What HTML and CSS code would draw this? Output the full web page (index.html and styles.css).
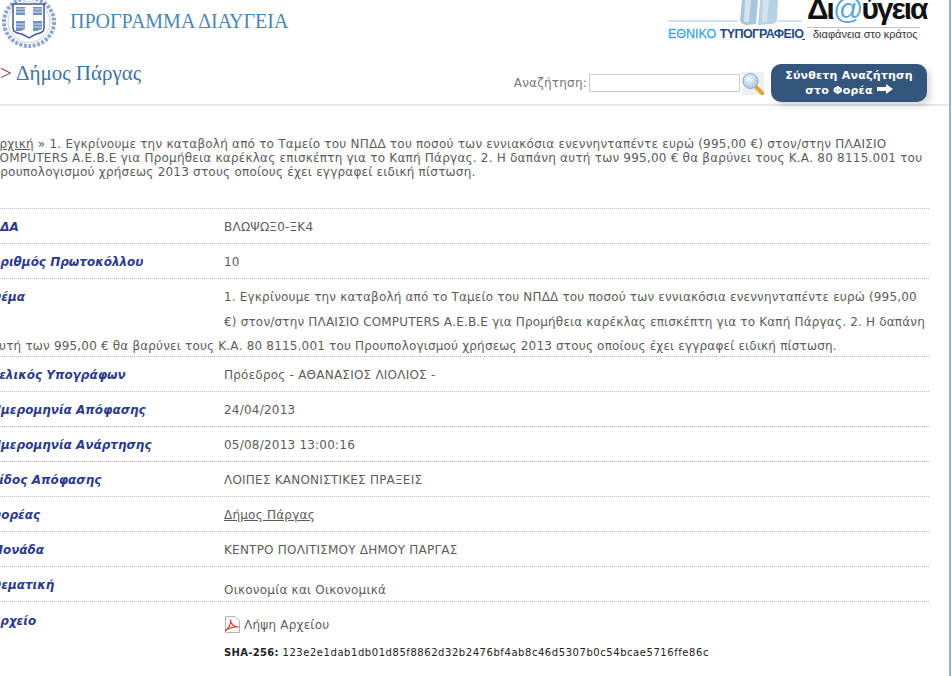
FILE: index.html
```html
<!DOCTYPE html>
<html lang="el">
<head>
    <meta charset="UTF-8">
    <meta name="viewport" content="width=device-width, initial-scale=1.0">
    <title>Πρόγραμμα Διαύγεια</title>
    <link rel="stylesheet" href="styles.css">
</head>
<body>
<div class="page">
    <div class="header">
        <div class="header-top">
            <div class="brand">
                <svg class="emblem" width="58" height="52" viewBox="0 0 58 52">
                    <ellipse cx="29" cy="24" rx="25" ry="24" fill="none" stroke="#8fa6cb" stroke-width="4" stroke-dasharray="3 1.5"/>
                    <ellipse cx="29" cy="24" rx="21" ry="20.5" fill="none" stroke="#c5d1e4" stroke-width="1"/>
                    <path d="M13 6H44V30Q44 35 36 36L29 40L22 36Q13 35 13 30Z" fill="#fff" stroke="#44598f" stroke-width="1.5"/>
                    <path d="M16 9H25V17H16ZM33 9H42V17H33ZM16 23H25V31L21 33H16ZM33 23H42V31L37 33H33Z" fill="#6f92c0"/>
                    <path d="M16 11H25M33 11H42M16 14H25M33 14H42M16 26H25M33 26H42M16 29H25M33 29H42" stroke="#d8e2ef" stroke-width="1"/>
                </svg>
                <span class="brand-name">ΠΡΟΓΡΑΜΜΑ ΔΙΑΥΓΕΙΑ</span>
            </div>
            <div class="logos">
                <a class="printer-logo" href="#">
                    <svg width="136" height="28" viewBox="0 0 136 28">
                        <path d="M0 21H70M110 21H134" stroke="#a9c4dc" stroke-width="1"/>
                        <path d="M74 0H90L88 24L78 25Q72 24 72 20Z" fill="#a8c5de"/>
                        <path d="M92 0H110L109 20Q108 24 103 24L90 25Z" fill="#b9d1e5"/>
                        <path d="M77 0H83L81 22H76ZM95 0H101L99 22H94Z" fill="#d3e2ef"/>
                    </svg>
                    <span class="printer-name"><span class="printer-cyan">ΕΘΝΙΚΟ</span> <b class="printer-navy">ΤΥΠΟΓΡΑΦΕΙΟ</b><u class="printer-tail">&nbsp;</u></span>
                </a>
                <div class="diavgeia-logo">
                    <div class="diavgeia-name">Δι<span class="diavgeia-at">@</span>ύγεια</div>
                    <div class="diavgeia-tag">διαφάνεια στο κράτος</div>
                </div>
            </div>
        </div>
        <div class="header-bottom">
            <h2 class="org-title"><span class="org-arrow">&gt;</span> Δήμος Πάργας</h2>
            <form class="search">
                <label class="search-label" for="q">Αναζήτηση:</label>
                <input class="search-input" id="q" type="text">
                <span class="search-icon">
                    <svg width="22" height="23" viewBox="0 0 22 23">
                        <defs>
                            <radialGradient id="lens" cx="0.4" cy="0.35" r="0.7">
                                <stop offset="0" stop-color="#f4f8fd"/>
                                <stop offset="1" stop-color="#a4c0e2"/>
                            </radialGradient>
                        </defs>
                        <path d="M13 14L20.500 21.500" stroke="#e0a535" stroke-width="4" stroke-linecap="round"/>
                        <circle cx="8.500" cy="9" r="7.500" fill="url(#lens)" stroke="#8ea9c9" stroke-width="1"/>
                    </svg>
                </span>
                <a class="advanced-btn" href="#">
                    Σύνθετη Αναζήτηση<br>στο Φορέα
                    <svg width="16" height="10" viewBox="0 0 16 10"><path d="M0 3H9V0L16 5L9 10V7H0Z" fill="#fff"/></svg>
                </a>
            </form>
        </div>
    </div>

    <div class="content">
        <p class="crumbs"><a href="#">Αρχική</a> » 1. Εγκρίνουμε την καταβολή από το Ταμείο του ΝΠΔΔ του ποσού των εννιακόσια ενεννηνταπέντε ευρώ (995,00 €) στον/στην ΠΛΑΙΣΙΟ COMPUTERS Α.Ε.Β.Ε για Προμήθεια καρέκλας επισκέπτη για το Καπή Πάργας. 2. Η δαπάνη αυτή των 995,00 € θα βαρύνει τους Κ.Α. 80 8115.001 του Προυπολογισμού χρήσεως 2013 στους οποίους έχει εγγραφεί ειδική πίστωση.</p>

        <div class="row"><span class="label">ΑΔΑ</span>ΒΛΩΨΩΞ0-ΞΚ4</div>
        <div class="row"><span class="label">Αριθμός Πρωτοκόλλου</span>10</div>
        <div class="row row-long"><span class="label">Θέμα</span>1. Εγκρίνουμε την καταβολή από το Ταμείο του ΝΠΔΔ του ποσού των εννιακόσια ενεννηνταπέντε ευρώ (995,00 €) στον/στην ΠΛΑΙΣΙΟ COMPUTERS Α.Ε.Β.Ε για Προμήθεια καρέκλας επισκέπτη για το Καπή Πάργας. 2. Η δαπάνη αυτή των 995,00 € θα βαρύνει τους Κ.Α. 80 8115.001 του Προυπολογισμού χρήσεως 2013 στους οποίους έχει εγγραφεί ειδική πίστωση.</div>
        <div class="row"><span class="label">Τελικός Υπογράφων</span>Πρόεδρος - ΑΘΑΝΑΣΙΟΣ ΛΙΟΛΙΟΣ -</div>
        <div class="row"><span class="label">Ημερομηνία Απόφασης</span>24/04/2013</div>
        <div class="row"><span class="label">Ημερομηνία Ανάρτησης</span>05/08/2013 13:00:16</div>
        <div class="row"><span class="label">Είδος Απόφασης</span>ΛΟΙΠΕΣ ΚΑΝΟΝΙΣΤΙΚΕΣ ΠΡΑΞΕΙΣ</div>
        <div class="row"><span class="label">Φορέας</span><a href="#">Δήμος Πάργας</a></div>
        <div class="row"><span class="label">Μονάδα</span>ΚΕΝΤΡΟ ΠΟΛΙΤΙΣΜΟΥ ΔΗΜΟΥ ΠΑΡΓΑΣ</div>
        <div class="row row-topic"><span class="label">Θεματική</span><span class="topic">Οικονομία και Οικονομικά</span></div>
        <div class="row row-file">
            <span class="label">Αρχείο</span>
            <div class="file-line">
                <svg width="17" height="17" viewBox="0 0 17 17">
                    <path d="M1.500 .5H11L15.500 5V16.500H1.500Z" fill="#fff" stroke="#b9b0b0" stroke-width="1"/>
                    <path d="M1 15C5 12 7 8 6.500 3.500C6.500 8 10 11 15 11C10 10.500 5 12 1 15Z" fill="none" stroke="#d8483f" stroke-width="1.200"/>
                </svg>
                <span>Λήψη Αρχείου</span>
            </div>
            <div class="sha"><b class="sha-name">SHA-256:</b> 123e2e1dab1db01d85f8862d32b2476bf4ab8c46d5307b0c54bcae5716ffe86c</div>
        </div>
    </div>
</div>
</body>
</html>
```

FILE: styles.css
```css
html, body {
    margin: 0;
    padding: 0;
    height: 100%;
    overflow: hidden;
    background-color: white;
}
body {
    font-family: "DejaVu Sans", Verdana, sans-serif;
    font-size: 12px;
    letter-spacing: 0.22px;
    color: #5c5c5c;
}
a {
    color: inherit;
}
.page {
    width: 949px;
    height: 676px;
    overflow: hidden;
    border-right: 2px solid #8fb3d9;
}
.header {
    height: 104px;
    border-bottom: 2px solid #e6e6e6;
}
.header-top {
    display: flex;
    justify-content: space-between;
    height: 60px;
    padding-right: 20px;
}
.brand {
    display: flex;
    align-items: flex-start;
    gap: 12px;
}
.emblem {
    margin-top: -2px;
}
.brand-name {
    margin-top: 10px;
    font-family: "Liberation Serif", serif;
    font-size: 20px;
    letter-spacing: 0;
    color: #4a86b8;
}
.logos {
    display: flex;
    gap: 3px;
}
.printer-logo {
    display: block;
    width: 136px;
    height: 41px;
    text-decoration: none;
    color: #1f4a86;
}
.printer-logo svg {
    display: block;
}
.printer-name {
    display: block;
    margin-top: -1px;
    font-family: "Liberation Sans", sans-serif;
    font-size: 12.500px;
    line-height: 14px;
    letter-spacing: 0;
    white-space: nowrap;
}
.printer-cyan {
    color: #36a9e1;
    -webkit-text-stroke: 0.3px #36a9e1;
}
.printer-navy {
    letter-spacing: -0.6px;
}
.printer-tail {
    display: inline-block;
    width: 3px;
    margin-left: -1px;
    overflow: hidden;
    vertical-align: top;
}
.diavgeia-logo {
    width: 122px;
}
.diavgeia-name {
    margin-top: -8px;
    padding-bottom: 2px;
    font-family: "Liberation Sans", sans-serif;
    font-size: 30px;
    font-weight: bold;
    line-height: 33px;
    letter-spacing: -2px;
    color: #111;
    border-bottom: 1px solid #c4c4c4;
    width: 113px;
    white-space: nowrap;
}
.diavgeia-at {
    color: #5aa5dc;
    font-weight: normal;
}
.diavgeia-tag {
    margin-left: 6px;
    font-family: "Liberation Sans", sans-serif;
    font-size: 11px;
    line-height: 13px;
    letter-spacing: 0;
    color: #333;
}
.header-bottom {
    display: flex;
    justify-content: space-between;
    padding-right: 22px;
}
.org-title {
    margin: 0;
    padding-top: 1px;
    font-family: "Liberation Serif", serif;
    font-size: 21px;
    font-weight: normal;
    letter-spacing: 0;
    color: #3f74a3;
}
.org-arrow {
    color: #8a3a3a;
}
.search {
    display: flex;
    align-items: center;
    height: 38px;
    margin-top: 4px;
}
.search-label {
    margin-right: 2px;
    color: #777;
}
.search-input {
    box-sizing: border-box;
    width: 151px;
    height: 18px;
    padding: 0;
    border: 1px solid #ccc;
}
.search-icon {
    display: block;
    width: 22px;
    height: 23px;
    margin: 0 7px 0 2px;
    background-color: #efefef;
}
.advanced-btn {
    display: block;
    width: 156px;
    height: 38px;
    padding-top: 4px;
    box-sizing: border-box;
    border-radius: 10px;
    background-color: #34567c;
    box-shadow: 4px 4px 6px rgba(0, 0, 0, 0.15);
    color: white;
    font-size: 11px;
    font-weight: bold;
    line-height: 15px;
    text-align: center;
    text-decoration: none;
}
.content {
    width: 938px;
    margin-left: -9px;
}
.crumbs {
    margin: 31px 0 29px;
    line-height: 14px;
}
.row {
    display: flow-root;
    border-top: 1px dotted #b5b5b5;
    height: 34px;
    line-height: 36px;
}
.row-long {
    height: 71px;
    padding-top: 6px;
    line-height: 24.500px;
    letter-spacing: 0.18px;
}
.row-file {
    height: 80px;
}
.label {
    float: left;
    width: 233px;
    height: 44px;
    font-style: italic;
    font-weight: bold;
    letter-spacing: 0;
    color: #2b3a8c;
}
.row-long .label {
    margin-top: -6px;
    line-height: 36px;
}
.row-file .label {
    height: 70px;
    line-height: 39px;
}
.topic {
    display: inline-block;
    padding-top: 10px;
    line-height: 27px;
}
.file-line {
    display: flex;
    align-items: center;
    gap: 3px;
    height: 27px;
    padding-top: 9px;
    line-height: 16px;
}
.sha {
    margin-top: 8px;
    font-size: 10px;
    line-height: 14px;
    letter-spacing: 0.56px;
    color: #222;
}
.sha-name {
    letter-spacing: 0.3px;
}
```
